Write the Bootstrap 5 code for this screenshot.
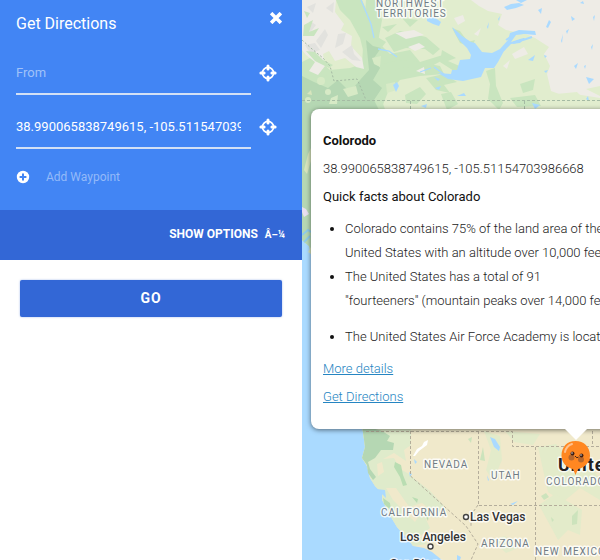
<!DOCTYPE html>
<html lang="en">
<head>
<meta charset="utf-8">
<meta name="viewport" content="width=device-width, initial-scale=1">
<title>Get Directions</title>
<link href="https://cdn.jsdelivr.net/npm/bootstrap@5.3.0/dist/css/bootstrap.min.css" rel="stylesheet">
<style>
body { font-family: Roboto, "Liberation Sans", sans-serif; font-size: 13px; line-height: 24px; background: #fff; }
.directions { flex: 0 0 302px; }
.route { background: #4285f4; color: #fff; padding: 12px 16px 20px; min-height: 210px; }
.route h1 { font-size: 16px; line-height: 24px; font-weight: 400; margin: 0; }
.icon-btn { background: none; border: 0; padding: 0; color: #fff; line-height: 0; }
.place { margin-right: 9px; height: 54px; }
.place input { border: 0; border-bottom: 2px solid #d3e0f5; border-radius: 0; background: none; color: #fff; font-size: 13px; line-height: 24px; padding: 0 10px 8px 0; height: 35px; box-shadow: none; }
.place input:focus { background: none; color: #fff; box-shadow: none; }
.place input::placeholder { color: #a0c2f9; opacity: 1; }
.waypoint { background: none; border: 0; padding: 0; color: #94baf9; font-size: 12px; line-height: 18px; }
.waypoint svg { color: #fff; }
.options { background: #3367d6; height: 50px; padding: 0 17px 2px 0; }
.options button { background: none; border: 0; padding: 0; color: #fff; font-size: 12px; font-weight: 700; }
.options small { font-size: 10px; }
.go { background: #3367d6; color: #fff; font-size: 14px; font-weight: 700; letter-spacing: 1px; height: 37px; border: 0; border-radius: 2px; padding: 0; box-shadow: 0 0 2px #3367d680; }
.go:hover { background: #2c5cc5; color: #fff; }
.map-pane { background: #aadaff; min-width: 0; }
.map-art { inset: 0; }
.state { font-size: 10px; fill: #707b84; letter-spacing: 1px; }
.city { font-size: 12px; fill: #333; font-weight: 500; }
.map-art text { paint-order: stroke; stroke: #fffc; stroke-width: 3px; stroke-linejoin: round; }
.bubble { left: 9px; top: 109px; width: 530px; padding: 20px 12px 16px; background: #fff; border-radius: 8px; box-shadow: 0 1px 5px #0008; font-weight: 300; color: #222; white-space: nowrap; }
.bubble::after { content: ""; position: absolute; left: 50%; top: 100%; margin-left: -11px; border: 11px solid transparent; border-top-color: #fff; border-bottom: 0; }
.bubble h2, .bubble h3 { font-size: 13px; line-height: 24px; margin: 0 0 4px; color: #111; }
.bubble h2 { font-weight: 700; }
.bubble h3 { font-weight: 400; margin-bottom: 8px; }
.bubble p { margin: 0 0 4px; }
.bubble ul { padding-left: 22px; margin: 0 0 8px; }
.bubble li::marker { color: #111; }
.bubble li:last-child { margin-top: 12px; }
.bubble a { color: #2585c2; }
</style>
</head>
<body>
<div class="d-flex min-vh-100">
  <aside class="directions bg-white">
    <form>
      <section class="route">
        <div class="d-flex justify-content-between align-items-start">
          <h1>Get Directions</h1>
          <button type="button" class="icon-btn me-1" aria-label="Close"><svg width="12" height="12" viewBox="0 0 12 12"><path d="M2.4 2.4 9.6 9.6M9.6 2.4 2.4 9.6" stroke="currentColor" stroke-width="3.6" stroke-linecap="square" /></svg></button>
        </div>
        <svg width="0" height="0" class="d-block"><defs><g id="locate"><circle cx="9" cy="9" r="5.6" fill="none" stroke="#fff" stroke-width="1.7"/><path d="M9 1.9V5.1M9 12.9V16.1M1.9 9H5.1M12.9 9H16.1" stroke="#fff" stroke-width="3" stroke-linecap="round"/></g></defs></svg>
        <div class="pt-4">
          <div class="place d-flex align-items-start">
            <input id="from" class="form-control flex-grow-1" type="text" placeholder="From" aria-label="From">
            <button type="button" class="icon-btn ms-2 mt-1" aria-label="Use my location as start"><svg width="18" height="18"><use href="#locate"/></svg></button>
          </div>
          <div class="place d-flex align-items-start">
            <input id="to" class="form-control flex-grow-1" type="text" value="38.990065838749615, -105.51154703986668" aria-label="To">
            <button type="button" class="icon-btn ms-2 mt-1" aria-label="Use my location as destination"><svg width="18" height="18"><use href="#locate"/></svg></button>
          </div>
          <button type="button" class="waypoint d-flex align-items-center"><svg class="me-3" width="14" height="14" viewBox="0 0 14 14"><circle cx="7" cy="7" r="6.2" fill="currentColor"/><path d="M7 3.6V10.4M3.6 7H10.4" stroke="#4285f4" stroke-width="2"/></svg>Add Waypoint</button>
        </div>
      </section>
      <div class="options d-flex justify-content-end align-items-center"><button type="button">SHOW OPTIONS <small class="ms-1">Â–¼</small></button></div>
      <div class="p-3 pt-0 mt-3"><div class="p-1"><button type="submit" class="go btn w-100">GO</button></div></div>
    </form>
  </aside>
  <main class="map-pane position-relative flex-grow-1 overflow-hidden">
    <svg class="map-art position-absolute w-100 h-100" viewBox="302 0 298 560" preserveAspectRatio="xMinYMin slice" role="img" aria-label="Map">
      <!-- northern land -->
      <path d="M302 0H600V112H320V235L313 258 309 246 302 240Z" fill="#e1edce"/>
      <path d="M302 62 314 56 330 70 350 68 362 64 366 0H375L382 20 378 42 390 54 410 50 420 62 440 66 444 74 420 76 400 80 388 92 380 112H320V235L313 258 309 246 302 240Z" fill="#c9e5bf"/>
      <path d="M336 0H362L370 18 374 35 386 42 378 52 392 62 380 78 378 90 386 112H320V235L313 258 309 246 302 240V72L318 80 330 74 344 80 358 74 366 62 360 38 350 20 340 10Z" fill="#c9e5bf"/>
      <path d="M366 40 373 46 381 48 374 58 380 68 373 80 382 88 374 100 380 112H320V235L313 258 309 246 302 240V76L314 82 328 88 338 80 350 92 360 80 369 70Z" fill="#b5d7b3"/>
      <path d="M302 0H336L335 12 344 24 341 30 352 36 351 46 362 58 364 69 356 67 345 58 335 61 329 51 323 54 325 66 318 75 309 71 315 62 306 55 302 50Z" fill="#eeece6"/>
      <g fill="#e2e2de"><path d="M305 31 310 21 316 25 309 34Z"/><path d="M316 41 325 29 328 35 321 48Z"/><path d="M326 8 334 2 333 13Z"/><path d="M338 34 346 33 343 44 335 48Z"/><path d="M342 52 352 45 354 54 361 61 352 60Z"/><path d="M307 7 316 3 313 13Z"/><path d="M305 45 315 43 320 50 310 53Z"/></g>
      <g fill="#c9e5bf"><path d="M304 25 313 20 309 32 319 28 314 36 303 36Z"/><path d="M306 51 315 52 323 60 333 65 329 68 315 61Z"/><path d="M304 11 310 13 307 18Z"/></g>
      <g fill="#d7eac6"><circle cx="321" cy="81" r="4"/><circle cx="328" cy="92" r="3"/><path d="M331 98 338 95 337 104 329 104Z"/><path d="M372 58 381 56 380 67 374 64Z"/><path d="M386 84 395 82 397 90 387 93Z"/><path d="M343 89 356 86 358 94 348 97Z"/><circle cx="308" cy="100" r="3"/></g>
      <g fill="#c9e5bf"><path d="M385 38 400 31 426 37 440 49 433 55 425 49 406 48 394 52Z"/><path d="M382 27 397 24 388 32Z"/><path d="M380 65 399 60 420 62 446 54 443 60 426 69 401 67 385 76Z"/><path d="M402 18 418 20 410 27Z"/><path d="M426 78 444 74 457 82 444 85 450 93 436 90Z"/><path d="M405 95 420 87 426 94 417 104 406 103Z"/><path d="M442 50 456 58 448 61 464 68 454 71 440 62Z"/><path d="M452 28 460 31 468 42 475 40 472 47 460 43Z"/><path d="M486 71 495 68 496 86 503 103 499 110 488 99 490 84Z"/><path d="M520 84 535 79 533 90 523 93Z"/><path d="M510 98 535 95 541 106 517 107Z"/><path d="M441 94 451 92 458 104 447 110Z"/></g>
      <g fill="#eeece6"><path d="M395 33 414 30 424 35 406 39Z"/><path d="M408 47 419 43 425 47 415 51Z"/><path d="M454 18 463 15 465 21 458 25Z"/><path d="M474 34 481 28 478 36Z"/><path d="M512 54 524 47 528 54 515 59Z"/><path d="M503 66 510 60 507 69Z"/><path d="M416 71 424 67 425 74Z"/></g>
      <path d="M471 0H600V98L575 94 570 98 551 91 547 74 550 66 544 54 549 47 535 38 525 34 506 30 498 25 502 14 488 11 479 6Z" fill="#eeece6"/>
      <g fill="#e1edce"><path d="M556 94 577 92 583 98 565 101Z"/><path d="M586 89 600 86V96Z"/></g>
      <g fill="#aadaff">
        <path d="M452 27 459 33 462 36 471 42 475 43 482 52 492 53 500 49 508 40 510 33 519 30 535 31 536 35 524 34 516 37 525 38 520 43 511 44 504 51 498 62 494 68 485 68 481 77 463 81 448 79 438 73 451 74 452 70 457 70 460 60 470 59 471 55 467 48 460 41 456 35Z"/>
        <path d="M427 18 434 17 441 22 439 26 433 24 427 21Z"/><path d="M504 7 511 4 519 3 524 5 516 8 507 10Z"/><path d="M538 10 542 8 541 14Z"/><path d="M546 27 549 20 551 22 548 28Z"/><path d="M393 85 397 82 399 86 396 92Z"/><path d="M434 77 440 79 438 81Z"/><path d="M435 88 441 86 439 90Z"/><path d="M457 96 464 93 466 96Z"/><path d="M421 106 427 104 426 108Z"/><path d="M528 60 535 55 533 61Z"/><path d="M586 77 594 79 589 84Z"/><path d="M566 31 569 29 567 34Z"/><path d="M561 41 563 34 562 43Z"/><path d="M574 66 578 63 576 69Z"/><path d="M586 99 588 96 589 101Z"/><path d="M532 103 540 105 535 109Z"/><path d="M516 0 527 0 521 3Z"/><path d="M498 19 500 16 499 21Z"/><path d="M571 16 575 19 572 21Z"/><path d="M580 3 583 1 584 4Z"/><path d="M591 47 593 44 592 50Z"/><path d="M544 71 548 70 546 73Z"/><path d="M544 55 547 56 545 58Z"/><path d="M487 27 489 22 488 29Z"/><path d="M593 17 595 15 594 21Z"/><path d="M584 66 586 65 585 69Z"/>
      </g>
      <path d="M516 35 525 34 531 36 520 39 511 42Z" fill="#e1edce"/><path d="M506 40 515 34M513 43 526 39 532 37M493 58 505 49" fill="none" stroke="#aadaff" stroke-width="2"/>
      <path d="M361 0 371 24 374 38M378 49 389 51 397 57M420 72 431 68M434 67 445 75 454 75" fill="none" stroke="#aadaff" stroke-width="1.3"/>
      <g fill="none" stroke="#a5bba4" stroke-dasharray="3 2"><path d="M302 100.500H600M410.500 101V110M524.500 101V110"/><path d="M302 40 312 49 323 58 330 66 334 81 357 79 361 88 366 100" stroke-dasharray="2 2"/></g>
      <!-- coast beside the bubble -->
      <g fill="#d8e5bd"><path d="M307 94 311 90 312 95Z"/><path d="M304 170 308 154 311 148V161L307 174Z"/><path d="M308 252 311 247V254Z"/></g><path d="M302 207 306 209 309 214 304 217 302 212Z" fill="#e8dff0"/><path d="M302 235 308 230 311 232M304 242 310 236" fill="none" stroke="#8fcbe8" stroke-width="2"/>
      <!-- western states -->
      <path d="M362 425H600V560H442L432 552 424 548 413 546 408 539 402 533 397 527 391 517 388 509 382 500 382 493 375 486 370 478 367 466 362 458 365 447Z" fill="#f0e9cb"/>
      <path d="M362 425H411V476L430 491 446 508 438 518 424 515 430 528 420 536 427 544 413 546 408 539 397 527 391 517 382 500 382 493 375 486 370 478 367 466 362 458 365 447Z" fill="#dfebcb"/>
      <g fill="#f0e9cb"><path d="M383 459 394 453 406 461 404 450 411 445V475L400 469 394 458Z"/><path d="M386 488 396 488 410 508 419 516 415 522 401 508 393 500Z"/><path d="M377 464 382 462 384 472 378 476Z"/><path d="M412 506 422 503 431 510 422 513Z"/></g>
      <path d="M362 425 382 431 390 436 387 441 394 443 393 450 381 450 375 458 368 462 370 469 376 477 373 480 368 473 367 465 362 458 365 447Z" fill="#b5d7b3"/>
      <g fill="#b9ddb2"><path d="M395 462 401 465 403 475 407 485 403 486 400 477 394 467Z"/><path d="M383 498 390 503 391 510 384 504Z"/><path d="M412 497 418 499 417 503Z"/><path d="M425 507 429 513 428 521 425 515Z"/></g>
      <g fill="#e3ebca"><path d="M484 431 500 436 502 460 493 481 486 470 491 450Z"/><path d="M538 447 556 444 570 461 590 464 600 480V500L580 488 563 502 548 492 544 474Z"/><path d="M539 505 555 494 582 510 580 535 568 530 558 540Z"/><path d="M492 540 505 536 518 548 506 553Z"/><path d="M505 431 540 434 533 445 514 442Z"/></g>
      <g fill="#cce3bc"><path d="M541 496 546 493 549 497 544 500Z"/><path d="M572 516 578 510 577 524 572 525Z"/><path d="M551 517 554 520 552 522Z"/><path d="M480 460 483 447 485 461Z"/><path d="M468 439 472 437 471 443Z"/></g>
      <g fill="#aadaff"><path d="M490 437 495 439 500 447 499 451 494 447Z"/><path d="M376 489 385 490 386 498 383 495Z"/><path d="M414 459 417 462 415 464Z"/><path d="M487 475 489 480 488 481Z"/><path d="M510 504 518 501 513 505Z"/><path d="M409 472 412 474 410 477Z"/><path d="M457 555 461 557 460 560H457Z"/></g>
      <path d="M413 456 417 449 422 446 424 442 428 440 427 445 419 451 415 456Z" fill="#fff"/>
      <g fill="none" stroke="#b4ad9b" stroke-dasharray="3 2"><path d="M366 431.500H512.500V446.500H600M410.500 431V476L466 526 478 544 471 560M478.500 431V505.500H600M535.500 447V560M592.500 431V446M478 505 471 515V526"/></g>
      <text x="376" y="7" class="state">NORTHWEST</text><text x="376" y="17" class="state">TERRITORIES</text>
      <text x="424" y="468" class="state">NEVADA</text><text x="491" y="479" class="state">UTAH</text><text x="381" y="516" class="state">CALIFORNIA</text><text x="481" y="547" class="state">ARIZONA</text><text x="535" y="555" class="state">NEW MEXICO</text>
      <text x="558" y="471" font-size="18" font-weight="700" fill="#222" letter-spacing="1">United States</text>
      <text x="546" y="485" class="state">COLORADO</text>
      <text x="470" y="521" class="city">Las Vegas</text><text x="400" y="541" class="city">Los Angeles</text><text x="390" y="568" class="city">San Diego</text>
      <g fill="#fff" stroke="#444" stroke-width="1.4"><circle cx="466" cy="517" r="2.500"/><circle cx="430.500" cy="546.500" r="2.500"/></g>
      <!-- smiling balloon marker -->
      <path d="M575.500 441C567 441 561.500 447 561.500 455.500 561.500 463 567 468 573 469L575.500 475 578 469C584 468 590 463 590 455.500 590 447 584 441 575.500 441Z" fill="#ff8721"/>
      <path d="M565 452C566 447 569 445 572 444" stroke="#ffc18d" stroke-width="2" stroke-linecap="round" fill="none"/>
      <g fill="#b7672c"><circle cx="571.500" cy="457.500" r="3"/><circle cx="581" cy="459.500" r="3"/></g><g fill="#402015"><circle cx="572.500" cy="453.500" r="2"/><circle cx="581.500" cy="455.500" r="2"/></g><path d="M575 456Q577 459 578.500 457" stroke="#402015" fill="none"/><g fill="#fff"><circle cx="572" cy="453" r=".7"/><circle cx="581" cy="455" r=".7"/></g>
    </svg>
    <article class="bubble position-absolute">
      <h2>Colorodo</h2>
      <p>38.990065838749615, -105.51154703986668</p>
      <h3>Quick facts about Colorado</h3>
      <ul>
        <li>Colorado contains 75% of the land area of the<br>United States with an altitude over 10,000 feet.</li>
        <li>The United States has a total of 91<br>"fourteeners" (mountain peaks over 14,000 feet).</li>
        <li>The United States Air Force Academy is located</li>
      </ul>
      <p><a href="#details">More details</a></p>
      <p><a href="#from">Get Directions</a></p>
    </article>
  </main>
</div>
<script src="https://cdn.jsdelivr.net/npm/bootstrap@5.3.0/dist/js/bootstrap.bundle.min.js"></script>
</body>
</html>
